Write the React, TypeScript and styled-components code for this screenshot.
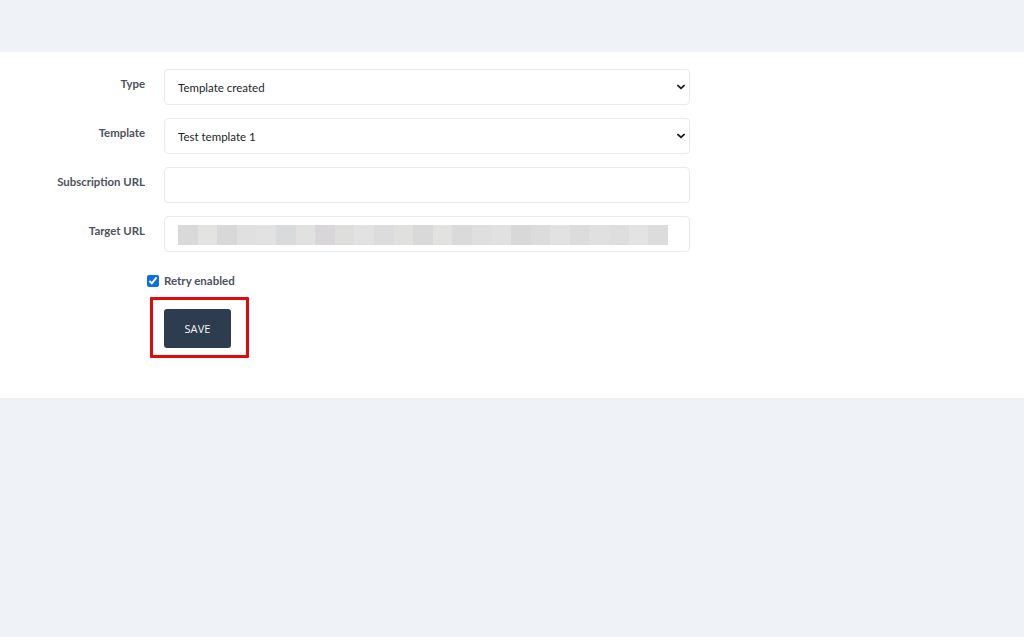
import React from "react";
import styled, { createGlobalStyle } from "styled-components";

const Global = createGlobalStyle`
  html, body { margin: 0; padding: 0; background: #eff2f7; }
  body { font-family: Lato, "Open Sans", sans-serif; }
  * { box-sizing: border-box; }
`;

const Page = styled.div`
  width: 1024px;
  height: 637px;
  background: #eff2f7;
  padding-top: 52px;
`;

const Card = styled.div`
  background: #ffffff;
  height: 346px;
  padding: 17px 0 0 0;
  box-shadow: 0 1px 2px rgba(0, 0, 0, 0.03);
`;

const Form = styled.div`
  display: grid;
  grid-template-columns: 145px 526px;
  column-gap: 19px;
  row-gap: 13px;
`;

const Label = styled.label`
  justify-self: end;
  align-self: start;
  padding-top: 7px;
  font-size: 11.4px;
  line-height: 15px;
  font-weight: 700;
  color: #4d525e;
`;

const Field = styled.div`
  height: 36px;
  border: 1px solid #e8eaee;
  border-radius: 4px;
  background: #fff;
  display: flex;
  align-items: center;
  padding: 0 4px 0 13px;
  font-size: 11.5px;
  color: #212529;
`;

const Value = styled.span`
  flex: 1;
`;

const Chevron = styled.svg`
  width: 8px;
  height: 8px;
`;

const Blur = styled.div`
  display: flex;
  height: 20px;
  margin-top: 1px;
  width: 490px;
`;

const Cell = styled.div`
  flex: 1;
  height: 100%;
`;

const CheckRow = styled.div`
  display: flex;
  align-items: center;
  height: 15px;
  margin-top: 21px;
  padding-left: 147px;
  gap: 5px;
`;

const Check = styled.input`
  margin: 0;
  width: 12px;
  height: 12px;
  accent-color: #0a6ee6;
`;

const CheckText = styled.span`
  font-size: 11.5px;
  line-height: 15px;
  font-weight: 700;
  color: #4d525e;
`;

const Highlight = styled.div`
  margin: 9px 0 0 150px;
  width: 99px;
  height: 61px;
  border: 3px solid #e00a0a;
  border-radius: 1px;
  padding: 9px 0 0 11px;
`;

const Button = styled.button`
  width: 67px;
  height: 39px;
  border: none;
  border-radius: 3px;
  background: #2e3c50;
  color: #f4f6f9;
  font-family: "Open Sans", Lato, sans-serif;
  font-size: 11px;
  font-weight: 500;
  letter-spacing: 0.1px;
  padding: 0;
`;

const blurColors = [
  "#d9d9d9", "#e3e3e1", "#d8d8d8", "#e0e0e0", "#e2e2e2", "#d9dadb",
  "#e1e2e0", "#d8d6d8", "#dededd", "#e2e2e2", "#dcdcdc", "#e0e0df",
  "#d9d9d9", "#e2e2e1", "#dadada", "#dfdfdf", "#e1e1e1", "#d8d8d8",
  "#dcdcdc", "#e2e2e2", "#dcdcdc", "#e0e0e0", "#dedede", "#e3e3e3",
  "#dcdcdc",
];

const ChevronIcon = () => (
  <Chevron viewBox="0 0 8 8">
    <path d="M1 2.6 L4 5.4 L7 2.6" fill="none" stroke="#222" strokeWidth="1.9" strokeLinecap="round" strokeLinejoin="round" />
  </Chevron>
);

export default function App() {
  return (
    <>
      <Global />
      <Page>
        <Card>
          <Form>
            <Label>Type</Label>
            <Field>
              <Value>Template created</Value>
              <ChevronIcon />
            </Field>
            <Label>Template</Label>
            <Field>
              <Value>Test template 1</Value>
              <ChevronIcon />
            </Field>
            <Label>Subscription URL</Label>
            <Field />
            <Label>Target URL</Label>
            <Field>
              <Blur>
                {blurColors.map((c, i) => (
                  <Cell key={i} style={{ background: c }} />
                ))}
              </Blur>
            </Field>
          </Form>
          <CheckRow>
            <Check type="checkbox" defaultChecked />
            <CheckText>Retry enabled</CheckText>
          </CheckRow>
          <Highlight>
            <Button>SAVE</Button>
          </Highlight>
        </Card>
      </Page>
    </>
  );
}
